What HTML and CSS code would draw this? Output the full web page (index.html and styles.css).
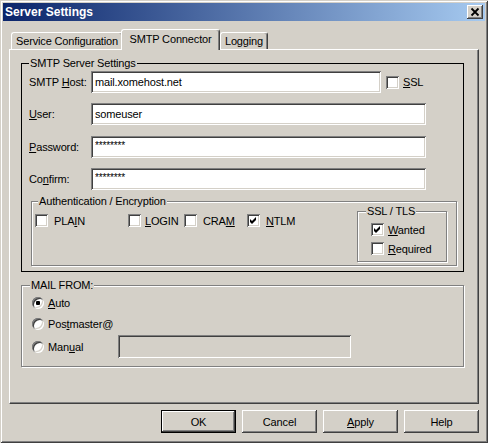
FILE: index.html
```html
<!DOCTYPE html>
<html>
<head>
<meta charset="utf-8">
<title>Server Settings</title>
<link rel="stylesheet" href="styles.css">
</head>
<body>
<div class="window">
  <div class="titlebar">
    <span class="title">Server Settings</span>
    <span class="close"><svg width="16" height="14" viewBox="0 0 16 14"><path d="M4.5 3.5 L11.5 10.5 M11.5 3.5 L4.5 10.5" stroke="#000" stroke-width="1.8" fill="none"/></svg></span>
  </div>
  <div class="tabstrip">
    <div class="tab tab-service">Service Configuration</div>
    <div class="tab tab-smtp active">SMTP Connector</div>
    <div class="tab tab-logging">Logging</div>
  </div>
  <div class="panel">
    <fieldset class="group group-black smtp">
      <legend class="legend-smtp">SMTP Server Settings</legend>
      <div class="gbody smtp-body">
        <div class="row row-host">
          <span class="lbl">SMTP <u>H</u>ost:</span>
          <input class="field field-host" type="text" value="mail.xomehost.net">
          <span class="cb cb-ssl"></span><span class="cb-label"><u>S</u>SL</span>
        </div>
        <div class="row row-user">
          <span class="lbl"><u>U</u>ser:</span>
          <input class="field field-wide" type="text" value="someuser">
        </div>
        <div class="row row-pass">
          <span class="lbl"><u>P</u>assword:</span>
          <input class="field field-wide field-secret" type="text" value="********">
        </div>
        <div class="row row-confirm">
          <span class="lbl">Co<u>n</u>firm:</span>
          <input class="field field-wide field-secret" type="text" value="********">
        </div>
        <fieldset class="group etched auth">
          <legend class="legend-auth">Authentication / Encryption</legend>
          <div class="auth-body">
            <div class="checks">
              <div class="check check-plain"><span class="cb"></span><span class="cb-label">PLA<u>I</u>N</span></div>
              <div class="check check-login"><span class="cb"></span><span class="cb-label"><u>L</u>OGIN</span></div>
              <div class="check check-cram"><span class="cb"></span><span class="cb-label">CRA<u>M</u></span></div>
              <div class="check check-ntlm"><span class="cb checked"><svg width="13" height="13" viewBox="0 0 13 13"><polygon points="3,5 5,7 9,3 9,6 5,10 3,8" fill="#000"/></svg></span><span class="cb-label"><u>N</u>TLM</span></div>
            </div>
            <fieldset class="group etched ssl">
              <legend class="legend-ssl">SSL / TLS</legend>
              <div class="ssl-body">
                <div class="check ssl-row"><span class="cb checked"><svg width="13" height="13" viewBox="0 0 13 13"><polygon points="3,5 5,7 9,3 9,6 5,10 3,8" fill="#000"/></svg></span><span class="cb-label"><u>W</u>anted</span></div>
                <div class="check ssl-row"><span class="cb"></span><span class="cb-label"><u>R</u>equired</span></div>
              </div>
            </fieldset>
          </div>
        </fieldset>
      </div>
    </fieldset>
    <fieldset class="group etched mail">
      <legend class="legend-mail">MAIL FROM:</legend>
      <div class="gbody mail-body">
        <div class="radio-row"><span class="radio checked"></span><span class="cb-label"><u>A</u>uto</span></div>
        <div class="radio-row"><span class="radio"></span><span class="cb-label">Pos<u>t</u>master@</span></div>
        <div class="radio-row radio-row-manual">
          <div class="radio-item"><span class="radio"></span><span class="cb-label">Man<u>u</u>al</span></div>
          <input class="field field-disabled" type="text" value="" disabled>
        </div>
      </div>
    </fieldset>
  </div>
  <div class="buttons">
    <div class="btn btn-default">OK</div>
    <div class="btn">Cancel</div>
    <div class="btn"><u>A</u>pply</div>
    <div class="btn">Help</div>
  </div>
</div>
</body>
</html>
```
FILE: styles.css
```css
* { box-sizing: border-box; }
html, body { margin: 0; padding: 0; }
body {
  width: 488px;
  height: 443px;
  overflow: hidden;
  background: #d4d0c8;
  font-family: "Liberation Sans", Arial, sans-serif;
  font-size: 11px;
  letter-spacing: -0.15px;
  color: #000;
}
.window {
  width: 488px;
  height: 443px;
  padding: 3px;
  display: flex;
  flex-direction: column;
  box-shadow: inset 1px 1px 0 #d4d0c8, inset -1px -1px 0 #404040, inset 2px 2px 0 #ffffff, inset -2px -2px 0 #808080;
}
.titlebar {
  height: 18px;
  display: flex;
  align-items: center;
  justify-content: space-between;
  padding: 0 2px;
  background: linear-gradient(to right, #0a246a, #a6caf0);
}
.title {
  color: #fff;
  font-weight: bold;
  font-size: 12px;
  letter-spacing: 0;
}
.close {
  width: 16px;
  height: 14px;
  display: flex;
  background: #d4d0c8;
  box-shadow: inset -1px -1px 0 #404040, inset 1px 1px 0 #ffffff, inset -2px -2px 0 #808080;
}
.tabstrip {
  display: flex;
  align-items: flex-end;
  height: 20px;
  margin: 8px 0 0 8px;
}
.tab {
  height: 17px;
  display: flex;
  align-items: center;
  justify-content: center;
  white-space: nowrap;
  border-left: 1px solid #fff;
  border-top: 1px solid #fff;
  border-right: 1px solid #404040;
  box-shadow: inset -1px 0 0 #808080;
  border-radius: 3px 3px 0 0;
  background: #d4d0c8;
}
.tab-service { width: 112px; }
.tab.active {
  width: 99px;
  height: 21px;
  margin: 0 0 -1px -2px;
  padding-bottom: 2px;
  z-index: 1;
}
.tab-logging { width: 48px; }
.panel {
  margin: 0 0 0 6px;
  width: 470px;
  height: 355px;
  border: 1px solid;
  border-color: #fff #404040 #404040 #fff;
  box-shadow: inset -1px -1px 0 #808080;
  display: flex;
  flex-direction: column;
}
fieldset {
  margin: 0;
  padding: 0;
  min-width: 0;
}
legend {
  padding: 0 1px;
  height: 13px;
  line-height: 13px;
  background: #d4d0c8;
  white-space: nowrap;
}
.group-black { border: 1px solid #000; }
.etched {
  border: 1px solid #808080;
  box-shadow: 1px 1px 0 #fff, inset 1px 1px 0 #fff;
}
.smtp { margin: 7px 0 0 11px; width: 443px; }
.legend-smtp { margin-left: 7px; }
.smtp-body { padding: 0 0 0 7px; }
.row {
  display: flex;
  align-items: center;
  height: 22px;
}
.row-host { margin-top: 1px; }
.row-user { margin-top: 10px; }
.row-pass { margin-top: 11px; }
.row-confirm { margin-top: 10px; }
.lbl { width: 62px; white-space: nowrap; }
.field {
  height: 22px;
  border: 0;
  outline: none;
  margin: 0;
  padding: 0 4px;
  font: inherit;
  letter-spacing: inherit;
  color: #000;
  background: #fff;
  box-shadow: inset 1px 1px 0 #808080, inset -1px -1px 0 #ffffff, inset 2px 2px 0 #404040, inset -2px -2px 0 #d4d0c8;
}
.field-host { width: 290px; margin-right: 5px; }
.field-wide { width: 335px; }
.field-secret { font-size: 10px; padding-bottom: 4px; }
.cb {
  width: 13px;
  height: 13px;
  flex: none;
  display: flex;
  background: #fff;
  box-shadow: inset 1px 1px 0 #808080, inset -1px -1px 0 #ffffff, inset 2px 2px 0 #404040, inset -2px -2px 0 #d4d0c8;
}
.cb-label { margin-left: 4px; white-space: nowrap; }
.check-plain .cb-label, .check-cram .cb-label, .check-ntlm .cb-label { margin-left: 6px; }
.auth { margin: 5px 6px 5px 2px; }
.legend-auth { margin-left: 6px; }
.auth-body { display: flex; align-items: flex-start; }
.checks {
  flex: 1;
  display: flex;
  align-items: center;
  height: 13px;
  margin-top: 6px;
  padding-left: 3px;
}
.check { display: flex; align-items: center; }
.check-plain { width: 93px; }
.check-login { width: 56px; }
.check-cram { width: 63px; }
.ssl { width: 90px; margin: -3px 9px 3px 0; }
.legend-ssl { margin-left: 8px; }
.ssl-body { padding: 2px 0 3px 13px; }
.ssl-row { height: 19px; }
.mail { margin: 7px 0 0 11px; width: 443px; }
.legend-mail { margin-left: 8px; }
.mail-body { padding: 0 0 8px 10px; }
.radio-row {
  display: flex;
  align-items: center;
  height: 20px;
  margin-top: 1px;
}
.radio-row-manual { height: 23px; }
.radio-item { width: 86px; display: flex; align-items: center; }
.radio {
  width: 12px;
  height: 12px;
  flex: none;
  border-radius: 50%;
  background: #fff;
  display: flex;
  align-items: center;
  justify-content: center;
  box-shadow: inset 1px 1px 0 #808080, inset -1px -1px 0 #ffffff, inset 2px 2px 0 #404040, inset -2px -2px 0 #d4d0c8;
}
.radio.checked::after {
  content: "";
  width: 4px;
  height: 4px;
  border-radius: 1px;
  background: #000;
}
.field-disabled {
  width: 233px;
  height: 23px;
  background: #d4d0c8;
}
.buttons {
  display: flex;
  justify-content: flex-end;
  gap: 6px;
  margin: 6px 6px 0 0;
}
.btn {
  width: 75px;
  height: 23px;
  display: flex;
  align-items: center;
  justify-content: center;
  background: #d4d0c8;
  box-shadow: inset -1px -1px 0 #404040, inset 1px 1px 0 #ffffff, inset -2px -2px 0 #808080;
}
.btn-default {
  border: 1px solid #000;
}
```
